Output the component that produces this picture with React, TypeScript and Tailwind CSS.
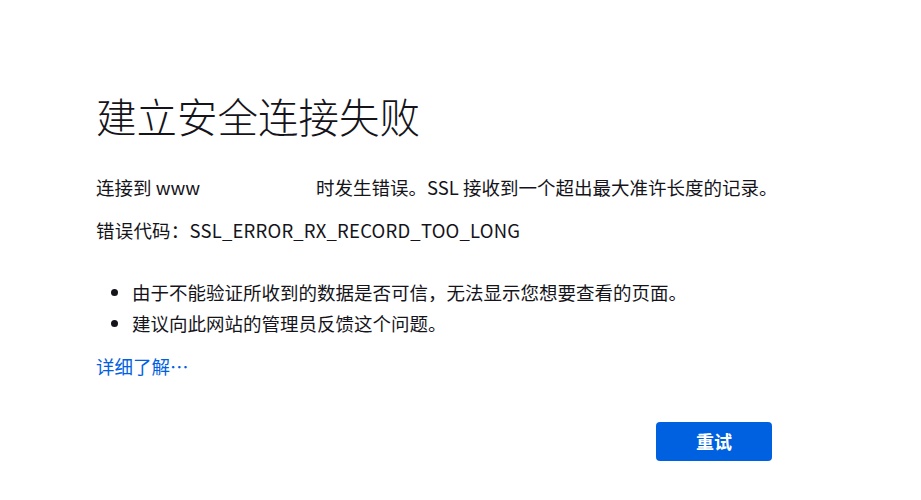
const App = () => {
  return (
    <div
      className="min-h-[500px] w-full bg-white text-[#15141a]"
      style={{ fontFamily: '"Noto Sans CJK SC", "Noto Sans", sans-serif' }}
    >
      <div className="w-[700px] ml-[96px] pt-[86px]">
        <h1 className="text-[40.5px] leading-[60px] font-light">建立安全连接失败</h1>

        <div className="mt-[27px] text-[18.5px] leading-[28px] whitespace-nowrap">
          <p className="flex">
            <span className="w-[220px] shrink-0">连接到 www</span>
            <span>时发生错误。SSL 接收到一个超出最大准许长度的记录。</span>
          </p>
          <p className="mt-[15px] tracking-[0.2px]">错误代码：SSL_ERROR_RX_RECORD_TOO_LONG</p>

          <ul className="mt-[34px] list-disc pl-[36px] space-y-[3px]">
            <li>由于不能验证所收到的数据是否可信，无法显示您想要查看的页面。</li>
            <li>建议向此网站的管理员反馈这个问题。</li>
          </ul>

          <a href="#" className="block mt-[15px] text-[#0061e0]">
            详细了解…
          </a>
        </div>

        <div className="flex justify-end mt-[42px] w-[676px]">
          <button className="w-[116px] h-[39px] rounded-[4px] bg-[#0061e0] text-white text-[18px] font-bold">
            重试
          </button>
        </div>
      </div>
    </div>
  );
};

export default App;
